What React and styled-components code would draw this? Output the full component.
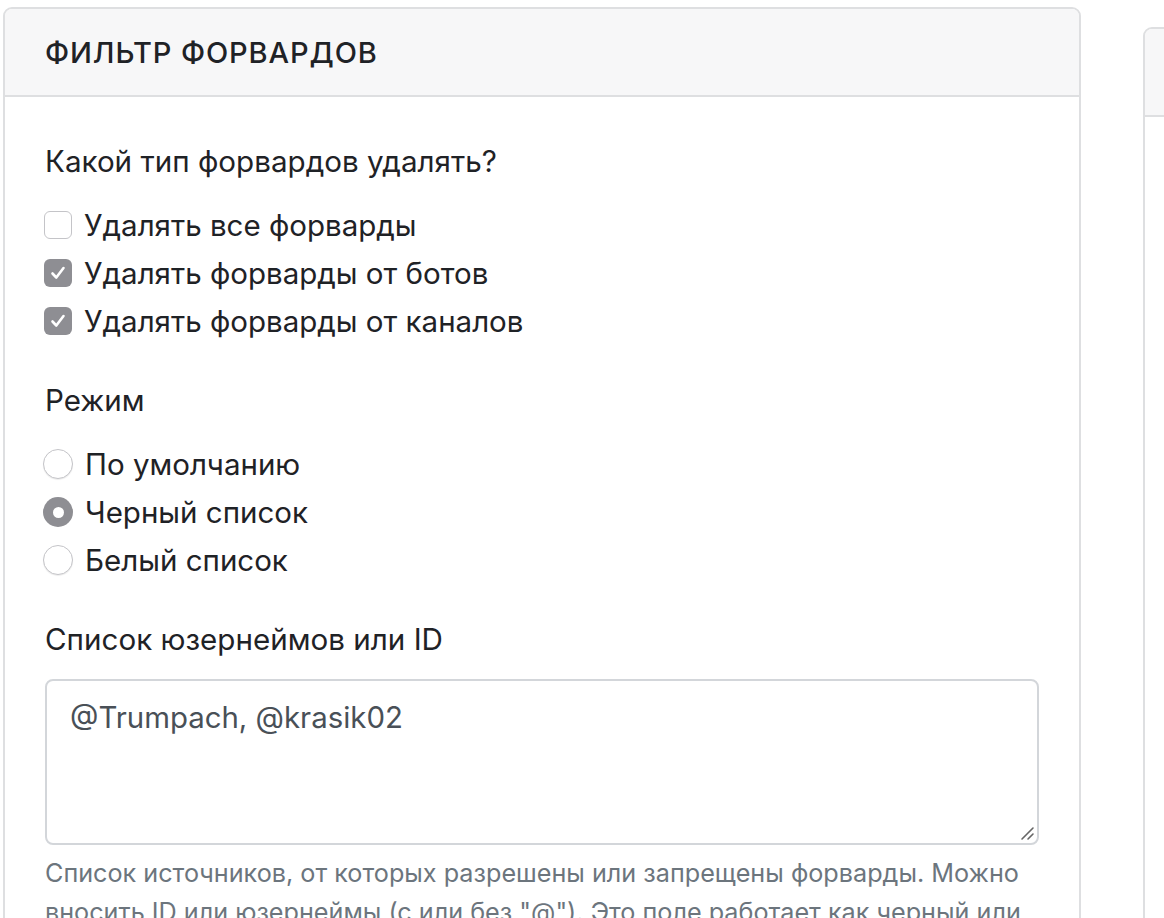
import React from "react";
import styled, { createGlobalStyle } from "styled-components";

const Global = createGlobalStyle`
  html, body { margin: 0; padding: 0; background: #fff; overflow: hidden; }
  body { font-family: Inter, "Noto Sans", sans-serif; color: #212529; }
  * { box-sizing: border-box; }
`;

const Page = styled.div`
  display: flex;
  align-items: flex-start;
  gap: 62px;
  padding: 7px 0 0 3px;
  width: 1164px;
  height: 918px;
  overflow: hidden;
`;

const Card = styled.section`
  flex: none;
  width: ${(p) => p.$w}px;
  margin-top: ${(p) => p.$top || 0}px;
  height: 1200px;
  border: 2px solid #dedfe1;
  border-radius: 9px;
  background: #fff;
  overflow: hidden;
`;

const CardHeader = styled.header`
  height: 88px;
  display: flex;
  align-items: center;
  padding: 0 40px;
  background: #f7f7f8;
  border-bottom: 2px solid #dedfe1;
  font-size: 29px;
  font-weight: 500;
  letter-spacing: 0.9px;
  color: #1f2226;
`;

const CardBody = styled.div`
  padding: 42px 40px 0 40px;
`;

const Group = styled.div`
  margin-bottom: 33px;
`;

const Label = styled.div`
  font-size: 29.6px;
  line-height: 45px;
  margin-bottom: 17px;
  color: #1f2226;
`;

const OptionRow = styled.label`
  display: flex;
  align-items: center;
  height: 48px;
  font-size: 29.5px;
  color: #1f2226;
`;

const Box = styled.span`
  flex: none;
  width: 28px;
  height: 28px;
  margin: 0 12px 0 -1px;
  border-radius: 6px;
  display: flex;
  align-items: center;
  justify-content: center;
  background: ${(p) => (p.$checked ? "#8e8e93" : "#fff")};
  border: ${(p) => (p.$checked ? "none" : "1.5px solid #c4c4c8")};
`;

const Radio = styled.span`
  flex: none;
  width: 30px;
  height: 30px;
  margin: 0 12px 0 -2px;
  border-radius: 50%;
  display: flex;
  align-items: center;
  justify-content: center;
  background: ${(p) => (p.$checked ? "#8e8e93" : "#fff")};
  border: ${(p) => (p.$checked ? "none" : "1.5px solid #c4c4c8")};
  box-shadow: ${(p) => (p.$checked ? "none" : "0 1px 1px rgba(0,0,0,0.08)")};
`;

const Dot = styled.span`
  width: 11px;
  height: 11px;
  border-radius: 50%;
  background: #fff;
`;

const TextBox = styled.div`
  position: relative;
  width: 994px;
  height: 166px;
  border: 2px solid #d3d6da;
  border-radius: 8px;
  padding: 17px 23px;
  font-size: 29.4px;
  line-height: 40px;
  color: #495057;
`;

const Grip = styled.svg`
  position: absolute;
  right: 2px;
  bottom: 2px;
`;

const Help = styled.p`
  margin: 9px 0 0;
  width: 994px;
  font-size: 25.2px;
  line-height: 39px;
  color: #6c757d;
`;

const Check = () => (
  <svg width="20" height="20" viewBox="0 0 20 20">
    <path d="M4.5 10.5 L8.3 14.5 L15.5 5" fill="none" stroke="#fff" strokeWidth="2.6" strokeLinecap="round" strokeLinejoin="round" />
  </svg>
);

export default function App() {
  return (
    <>
      <Global />
      <Page>
        <Card $w={1078}>
          <CardHeader>ФИЛЬТР ФОРВАРДОВ</CardHeader>
          <CardBody>
            <Group>
              <Label>Какой тип форвардов удалять?</Label>
              <OptionRow><Box />Удалять все форварды</OptionRow>
              <OptionRow><Box $checked><Check /></Box>Удалять форварды от ботов</OptionRow>
              <OptionRow><Box $checked><Check /></Box>Удалять форварды от каналов</OptionRow>
            </Group>
            <Group>
              <Label>Режим</Label>
              <OptionRow><Radio />По умолчанию</OptionRow>
              <OptionRow><Radio $checked><Dot /></Radio>Черный список</OptionRow>
              <OptionRow><Radio />Белый список</OptionRow>
            </Group>
            <Group>
              <Label>Список юзернеймов или ID</Label>
              <TextBox>
                @Trumpach, @krasik02
                <Grip width="16" height="16" viewBox="0 0 16 16">
                  <path d="M3 14 L14 3 M9 14 L14 9" stroke="#666" strokeWidth="1.6" strokeLinecap="round" />
                </Grip>
              </TextBox>
              <Help>
                Список источников, от которых разрешены или запрещены форварды. Можно вносить ID или юзернеймы (с или без "@"). Это поле работает как черный или белый список в зависимости от выбранного режима.
              </Help>
            </Group>
          </CardBody>
        </Card>
        <Card $w={400} $top={20}>
          <CardHeader />
        </Card>
      </Page>
    </>
  );
}
